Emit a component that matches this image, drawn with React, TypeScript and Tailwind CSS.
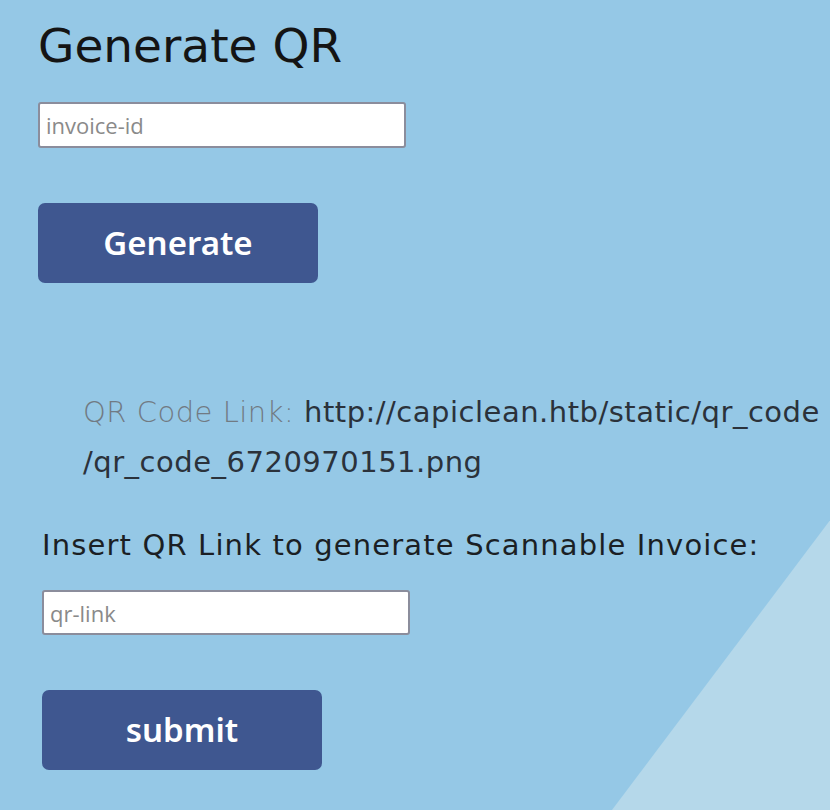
import React from 'react';

const App: React.FC = () => {
  return (
    <div className="relative w-[830px] h-[810px] overflow-hidden bg-[#95c8e6]">
      <svg className="absolute inset-0" width="830" height="810" viewBox="0 0 830 810">
        <polygon points="834,515 834,810 612,810" fill="#b5d8ea" />
      </svg>

      <div className="relative flex flex-col">
        <h1 className="ml-[38px] mt-[18px] text-[47px] leading-[56px] font-normal text-[#141414] font-['DejaVu_Sans',sans-serif]">
          Generate QR
        </h1>

        <input
          type="text"
          placeholder="invoice-id"
          className="ml-[38px] mt-[28px] w-[368px] h-[46px] border-2 border-[#8b8d9c] rounded-[3px] bg-white px-[6px] text-[22px] text-[#333] placeholder:text-[#8a8a8a] font-['Open_Sans',sans-serif] outline-none"
        />

        <button className="ml-[38px] mt-[55px] w-[280px] h-[80px] rounded-[7px] bg-[#3f5790] text-white text-[33px] font-semibold font-['Noto_Sans',sans-serif]">
          Generate
        </button>

        <p className="ml-[83px] mt-[104px] text-[29px] leading-[50px] tracking-[0.5px] font-['DejaVu_Sans',sans-serif] text-[#2b323b]">
          <span className="text-[#717a83] font-light">QR Code Link: </span>
          http://capiclean.htb/static/qr_code
          <br />
          /qr_code_6720970151.png
        </p>

        <p className="ml-[42px] mt-[38px] text-[29px] leading-[40px] tracking-[1.15px] font-['DejaVu_Sans',sans-serif] text-[#1b1f24]">
          Insert QR Link to generate Scannable Invoice:
        </p>

        <input
          type="text"
          placeholder="qr-link"
          className="ml-[42px] mt-[25px] w-[368px] h-[45px] border-2 border-[#8b8d9c] rounded-[3px] bg-white px-[6px] text-[22px] text-[#333] placeholder:text-[#8a8a8a] font-['Open_Sans',sans-serif] outline-none"
        />

        <button className="ml-[42px] mt-[55px] w-[280px] h-[80px] rounded-[7px] bg-[#3f5790] text-white text-[33px] font-semibold font-['Noto_Sans',sans-serif]">
          submit
        </button>
      </div>
    </div>
  );
};

export default App;
